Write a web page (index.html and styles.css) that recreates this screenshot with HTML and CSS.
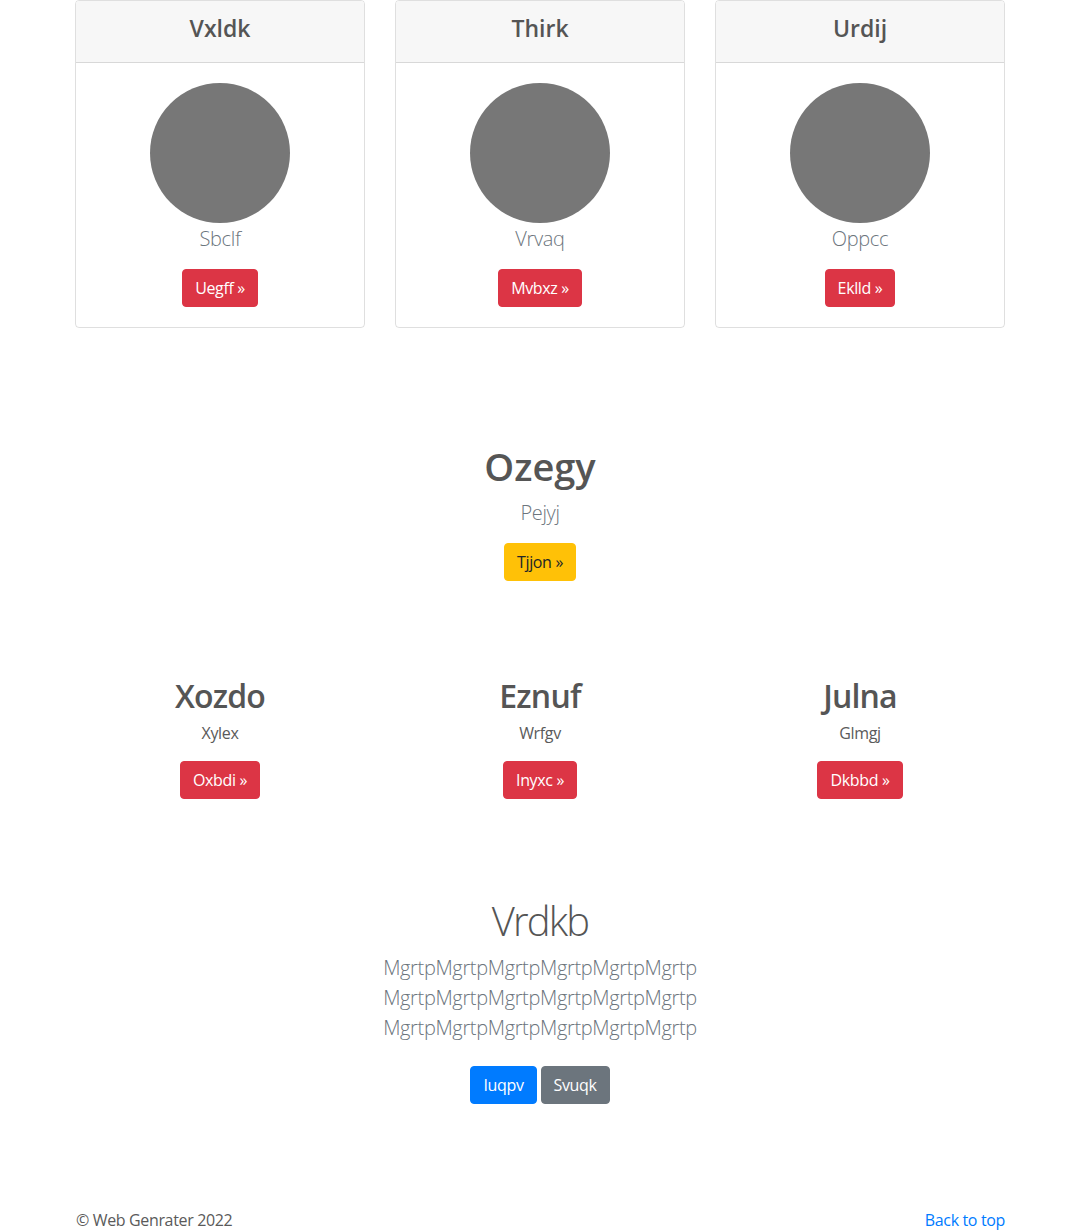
FILE: index.html
```html
<!DOCTYPE html>
<html lang="en">
<head>
<meta charset="utf-8">
<title>Page</title>
<link rel="stylesheet" href="styles.css">
</head>
<body>
<main class="container">
  <section class="row cards">
    <div class="col">
      <div class="card">
        <div class="card-header"><h4 class="card-title">Vxldk</h4></div>
        <div class="card-body">
          <svg class="avatar" width="140" height="140" viewBox="0 0 140 140"><circle cx="70" cy="70" r="70" fill="#777"/></svg>
          <p class="lead muted">Sbclf</p>
          <a class="btn btn-danger" href="#">Uegff »</a>
        </div>
      </div>
    </div>
    <div class="col">
      <div class="card">
        <div class="card-header"><h4 class="card-title">Thirk</h4></div>
        <div class="card-body">
          <svg class="avatar" width="140" height="140" viewBox="0 0 140 140"><circle cx="70" cy="70" r="70" fill="#777"/></svg>
          <p class="lead muted">Vrvaq</p>
          <a class="btn btn-danger" href="#">Mvbxz »</a>
        </div>
      </div>
    </div>
    <div class="col">
      <div class="card">
        <div class="card-header"><h4 class="card-title">Urdij</h4></div>
        <div class="card-body">
          <svg class="avatar" width="140" height="140" viewBox="0 0 140 140"><circle cx="70" cy="70" r="70" fill="#777"/></svg>
          <p class="lead muted">Oppcc</p>
          <a class="btn btn-danger" href="#">Eklld »</a>
        </div>
      </div>
    </div>
  </section>

  <section class="hero">
    <h1 class="hero-title">Ozegy</h1>
    <p class="lead muted">Pejyj</p>
    <a class="btn btn-warning" href="#">Tjjon »</a>
  </section>

  <section class="row features">
    <div class="col">
      <h2 class="feature-title">Xozdo</h2>
      <p class="feature-text">Xylex</p>
      <a class="btn btn-danger" href="#">Oxbdi »</a>
    </div>
    <div class="col">
      <h2 class="feature-title">Eznuf</h2>
      <p class="feature-text">Wrfgv</p>
      <a class="btn btn-danger" href="#">Inyxc »</a>
    </div>
    <div class="col">
      <h2 class="feature-title">Julna</h2>
      <p class="feature-text">Glmgj</p>
      <a class="btn btn-danger" href="#">Dkbbd »</a>
    </div>
  </section>

  <section class="intro">
    <h1 class="intro-title">Vrdkb</h1>
    <p class="lead muted intro-text">MgrtpMgrtpMgrtpMgrtpMgrtpMgrtp MgrtpMgrtpMgrtpMgrtpMgrtpMgrtp MgrtpMgrtpMgrtpMgrtpMgrtpMgrtp</p>
    <div class="btn-group">
      <a class="btn btn-primary" href="#">Iuqpv</a>
      <a class="btn btn-secondary" href="#">Svuqk</a>
    </div>
  </section>

  <footer class="footer">
    <p class="copy">© Web Genrater 2022</p>
    <a class="back" href="#">Back to top</a>
  </footer>
</main>
</body>
</html>
```
FILE: styles.css
```css
* { box-sizing: border-box; }
html, body { margin: 0; padding: 0; }
body {
  font-family: "Segoe UI", "Open Sans", "Noto Sans", sans-serif;
  font-size: 16px;
  line-height: 1.5;
  letter-spacing: -0.022em;
  color: #5a5a5a;
  background: #fff;
}
.container {
  width: 960px;
  margin: 0 auto;
  padding: 0 15px;
}
.row {
  display: flex;
  margin: 0 -15px;
}
.col {
  flex: 1 1 0;
  padding: 0 15px;
  text-align: center;
}
p { margin: 0 0 16px; }
h1, h2, h4 { margin: 0 0 8px; font-weight: 600; line-height: 1.2; color: #555; }

.card {
  border: 1px solid rgba(0,0,0,.125);
  border-radius: 4px;
  text-align: center;
  overflow: hidden;
}
.card-header {
  background: #f7f7f7;
  border-bottom: 1px solid rgba(0,0,0,.125);
  padding: 9px 20px 15px;
}
.card-title {
  margin: 0;
  font-size: 23px;
  line-height: 37px;
  letter-spacing: 0;
}
.card-body { padding: 20px; }
.avatar { display: block; margin: 0 auto; }
.lead { font-size: 20px; font-weight: 300; line-height: 30px; }
.cards .lead { position: relative; top: 1px; }
.muted { color: #6c757d; }

.btn {
  display: inline-block;
  font-size: 16px;
  line-height: 24px;
  padding: 6px 12px;
  border: 1px solid transparent;
  border-radius: 4px;
  text-decoration: none;
  font-weight: 400;
  vertical-align: middle;
}
.btn-danger { background: #dc3545; border-color: #dc3545; color: #fff; }
.btn-warning { background: #ffc107; border-color: #ffc107; color: #212529; }
.btn-primary { background: #007bff; border-color: #007bff; color: #fff; }
.btn-secondary { background: #6c757d; border-color: #6c757d; color: #fff; }

.hero { text-align: center; margin-top: 114px; }
.hero-title { font-size: 38px; line-height: 48px; letter-spacing: 0; }
.hero .lead { margin-bottom: 15px; }

.features { margin-top: 96px; }
.feature-title { font-size: 32px; line-height: 38px; letter-spacing: -0.025em; }
.feature-text { margin-bottom: 14px; position: relative; top: -2px; }

.intro { text-align: center; margin-top: 98px; }
.intro-title { font-size: 40px; line-height: 48px; font-weight: 300; letter-spacing: -0.045em; }
.intro-text { width: 330px; margin: 0 auto 23px; }
.btn-group { display: flex; justify-content: center; gap: 4px; }

.footer {
  margin-top: 104px;
  display: flex;
  justify-content: space-between;
  align-items: center;
  height: 24px;
}
.footer .copy { margin: 0 0 0 1px; }
.back { color: #007bff; text-decoration: none; }
```
